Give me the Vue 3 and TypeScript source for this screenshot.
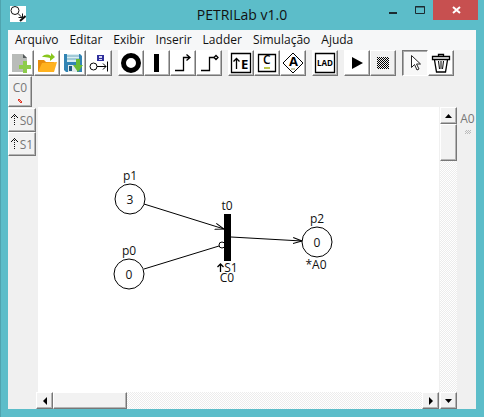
<script setup lang="ts">
import { ref } from 'vue'

interface Tool { id: string; label: string }
interface Place { id: string; x: number; y: number; tokens: number; action?: string }

const menus: string[] = ['Arquivo', 'Editar', 'Exibir', 'Inserir', 'Ladder', 'Simulação', 'Ajuda']

const toolGroups: Tool[][] = [
  [
    { id: 'new', label: 'Novo' },
    { id: 'open', label: 'Abrir' },
    { id: 'save', label: 'Salvar' },
    { id: 'saveNet', label: 'Salvar rede' },
  ],
  [
    { id: 'place', label: 'Lugar' },
    { id: 'transition', label: 'Transição' },
    { id: 'arc', label: 'Arco' },
    { id: 'inhibitor', label: 'Arco inibidor' },
  ],
  [
    { id: 'event', label: 'Evento' },
    { id: 'condition', label: 'Condição' },
    { id: 'action', label: 'Ação' },
  ],
  [{ id: 'ladder', label: 'Ladder' }],
  [
    { id: 'play', label: 'Iniciar' },
    { id: 'stop', label: 'Parar' },
  ],
  [
    { id: 'select', label: 'Selecionar' },
    { id: 'trash', label: 'Excluir' },
  ],
]

const activeTool = ref<string>('select')
const events: string[] = ['S0', 'S1']

const places: Place[] = [
  { id: 'p1', x: 92, y: 92, tokens: 3 },
  { id: 'p0', x: 91, y: 167, tokens: 0 },
  { id: 'p2', x: 279, y: 135, tokens: 0, action: '*A0' },
]
</script>

<template>
  <div class="window">
    <header class="titlebar">
      <svg class="app-icon" width="16" height="16" viewBox="0 0 16 16" aria-hidden="true">
        <rect width="16" height="16" fill="#fff" />
        <circle cx="5" cy="4.500" r="4" fill="none" stroke="#111" />
        <path d="M8 7.500l4 4M8.500 11.500h4v-4" fill="none" stroke="#111" />
        <path d="M10 15l5.500-5" stroke="#111" stroke-width="2" />
      </svg>
      <h1>PETRILab v1.0</h1>
      <div class="controls">
        <button class="ctl" aria-label="Minimizar">
          <svg width="12" height="12" viewBox="0 0 12 12"><path d="M2 8h8v2H2z" fill="#1c2b30" /></svg>
        </button>
        <button class="ctl" aria-label="Maximizar">
          <svg width="12" height="12" viewBox="0 0 12 12"><path d="M1.500 2.500h9v7h-9zM1 3h10" fill="none" stroke="#1c2b30" /></svg>
        </button>
        <button class="ctl close" aria-label="Fechar">
          <svg width="12" height="12" viewBox="0 0 12 12"><path d="M3 3l7 6M10 3L3 9" stroke="#fff" stroke-width="2" /></svg>
        </button>
      </div>
    </header>

    <main class="client">
      <nav class="menubar">
        <button v-for="m in menus" :key="m">{{ m }}</button>
      </nav>

      <div class="toolbar">
        <div v-for="(group, gi) in toolGroups" :key="gi" class="group">
          <button
            v-for="t in group"
            :key="t.id"
            class="raised tool"
            :class="{ pressed: activeTool === t.id, idle: t.id === 'stop' }"
            :aria-label="t.label"
            :aria-pressed="activeTool === t.id"
            @click="activeTool = t.id"
          >
            <svg width="24" height="24" viewBox="0 0 24 24">
              <g v-if="t.id === 'new'">
                <path d="M3 3h11l4 4v14H3z" fill="#b9bcb9" />
                <path d="M14 3l4 4h-4z" fill="#555b5b" />
                <path d="M14 10h4v4h4v4h-4v4h-4v-4h-4v-4h4z" fill="#8dcc4b" />
              </g>
              <g v-else-if="t.id === 'open'">
                <path d="M3 9h6l2 2h8v9H3z" fill="#e88d0b" />
                <path d="M7 12l15-1-3 10H3z" fill="#ffb21f" />
                <path d="M7 6c3-3 6-3 9-1V2l4 4-5 4V7c-3-1-5-1-8-1z" fill="#89c71d" />
              </g>
              <g v-else-if="t.id === 'save'">
                <path d="M3 3h16l2 2v16H5l-2-2z" fill="#3184b4" />
                <path d="M6 3h12v8H6z" fill="#d8edf2" />
                <path d="M6 5h12M6 8h12" stroke="#6ba6bd" />
                <path d="M7 14h9v7H7z" fill="#e0e9eb" />
                <path d="M8 15h3v5H8z" fill="#245b7e" />
                <path d="M15 8h4v6h3l-5 7-5-7h3z" fill="#69bb35" />
              </g>
              <g v-else-if="t.id === 'saveNet'">
                <path d="M10 4h7v6h-7z" fill="#30309c" />
                <path d="M12 5h3v2h-3zM12 8h3v1h-3z" fill="#d8d8f4" />
                <circle cx="6.500" cy="15.500" r="3.500" fill="none" stroke="#000" />
                <path d="M10 15.500h9M16 12.500l3 3-3 3M20.500 10.500v10" fill="none" stroke="#000" />
              </g>
              <circle v-else-if="t.id === 'place'" cx="12" cy="12" r="7.500" fill="#fff" stroke="#000" stroke-width="5" />
              <path v-else-if="t.id === 'transition'" d="M9 3h5v18H9z" fill="#000" />
              <path v-else-if="t.id === 'arc'" d="M4 19.500h8.500v-13H19M15.500 3.500l3.500 3-3.500 3" fill="none" stroke="#000" stroke-width="1.300" />
              <g v-else-if="t.id === 'inhibitor'" fill="none" stroke="#000" stroke-width="1.300">
                <path d="M4 19.500h8.500v-13H17" /><path d="M19 4.500l2 2-2 2-2-2z" />
              </g>
              <g v-else-if="t.id === 'event'">
                <path d="M2.500 2.500h19v19h-19z" fill="#fff" stroke="#000" stroke-width="1.300" />
                <path d="M7.500 18V8M4.500 10.500l3-3 3 3" fill="none" stroke="#000" stroke-width="1.300" />
                <text class="glyph" x="12" y="18">E</text>
              </g>
              <g v-else-if="t.id === 'condition'">
                <path d="M3.500 3.500h17v17h-17z" fill="#fff" stroke="#000" stroke-width="1.300" />
                <text class="glyph plain" x="8" y="13">C</text>
                <path d="M9 16h6v2H9z" fill="#bdc54c" />
              </g>
              <g v-else-if="t.id === 'action'">
                <path d="M12 2l10 10-10 10L2 12z" fill="#fff" stroke="#000" />
                <text class="glyph" x="8" y="15">A</text>
                <path d="M10 17h4v2h-4z" fill="#c8c9a8" />
              </g>
              <g v-else-if="t.id === 'ladder'">
                <path d="M2.500 2.500h19v19h-19z" fill="#fff" stroke="#000" stroke-width="1.300" />
                <text class="glyph small" x="12" y="15" text-anchor="middle">LAD</text>
              </g>
              <path v-else-if="t.id === 'play'" d="M7 6l11 6-11 6z" fill="#000" />
              <g v-else-if="t.id === 'stop'">
                <pattern id="mesh" width="2" height="2" patternUnits="userSpaceOnUse">
                  <path d="M0 0h1v1H0zM1 1h1v1H1z" fill="#000" shape-rendering="crispEdges" />
                </pattern>
                <path d="M6 6h12v12H6z" fill="url(#mesh)" />
              </g>
              <path v-else-if="t.id === 'select'" d="M8.500 4.500v12l3-3 2.500 5.500 2-1-2.500-5h4z" fill="#fff" stroke="#222" />
              <g v-else-if="t.id === 'trash'" fill="none" stroke="#000">
                <path d="M9.500 5V3.500h5V5M3.500 5.500h17v3h-17zM5.500 9l2 12h9l2-12" stroke-width="1.300" />
                <path d="M9.500 10l1 8M14.500 10l-1 8M12 10v8" />
              </g>
            </svg>
          </button>
        </div>
      </div>

      <div class="conditions">
        <button class="raised condition">
          <span>C0</span>
          <svg width="6" height="6" viewBox="0 0 6 6" aria-hidden="true">
            <path d="M1 2l1-1 3 3-1 1z" fill="#f6b0a4" stroke="#e0392a" />
          </svg>
        </button>
      </div>

      <div class="workspace">
        <aside class="events">
          <button v-for="e in events" :key="e" class="raised event">
            <svg width="7" height="12" viewBox="0 0 7 12" aria-hidden="true">
              <path
                d="M3 0h1v1H3zM3 2h1v1H3zM3 4h1v1H3zM3 6h1v1H3zM3 8h1v1H3zM3 10h1v1H3zM2 1h1v1H2zM4 1h1v1H4zM1 2h1v1H1zM5 2h1v1H5zM0 3h1v1H0zM6 3h1v1H6z"
                fill="#111"
              />
            </svg>
            <span>{{ e }}</span>
          </button>
        </aside>

        <svg class="net" role="img" aria-label="Rede de Petri">
          <defs>
            <marker id="arrow" viewBox="0 0 10 8" refX="9" refY="4" markerWidth="10" markerHeight="8" orient="auto">
              <path d="M0 1l9 3-9 3" fill="none" stroke="#000" />
            </marker>
          </defs>
          <g stroke="#000" fill="none">
            <path d="M106 97l80 25" marker-end="url(#arrow)" />
            <path d="M106 162l75-23" />
            <circle cx="184" cy="138" r="3" fill="#fff" />
            <path d="M193 130l71 4" marker-end="url(#arrow)" />
          </g>
          <rect x="186" y="107" width="7" height="47" />
          <text x="189" y="103">t0</text>
          <path d="M182.500 165v-8M179.500 160l3-3 3 3" fill="none" stroke="#000" stroke-width="1.300" />
          <text>
            <tspan x="193" y="165">S1</tspan>
            <tspan x="189" y="175">C0</tspan>
          </text>
          <g v-for="p in places" :key="p.id">
            <circle :cx="p.x" :cy="p.y" r="15" fill="#fff" stroke="#000" />
            <text :x="p.x" :y="p.y + 5">{{ p.tokens }}</text>
            <text :x="p.x" :y="p.y - 19">{{ p.id }}</text>
            <text v-if="p.action" :x="p.x - 1" :y="p.y + 27">{{ p.action }}</text>
          </g>
        </svg>

        <div class="scroll vertical">
          <button class="raised" aria-label="Rolar para cima">
            <svg width="7" height="4" viewBox="0 0 7 4"><path d="M0 4l3.500-4L7 4z" /></svg>
          </button>
          <div class="raised thumb"></div>
          <button class="raised end" aria-label="Rolar para baixo">
            <svg width="7" height="4" viewBox="0 0 7 4"><path d="M0 0l3.500 4L7 0z" /></svg>
          </button>
        </div>

        <div class="scroll horizontal">
          <button class="raised" aria-label="Rolar para a esquerda">
            <svg width="4" height="8" viewBox="0 0 4 8"><path d="M4 0L0 4l4 4z" /></svg>
          </button>
          <div class="raised thumb"></div>
          <button class="raised end" aria-label="Rolar para a direita">
            <svg width="4" height="8" viewBox="0 0 4 8"><path d="M0 0l4 4-4 4z" /></svg>
          </button>
        </div>

        <aside class="actions">
          <span>A0</span>
          <i></i>
        </aside>
      </div>
    </main>
  </div>
</template>

<style>
body {
  margin: 0;
}
</style>

<style scoped>
.window {
  box-sizing: border-box;
  min-height: 100vh;
  display: flex;
  flex-direction: column;
  padding: 0 8px 8px;
  background: #5cbdc9;
  box-shadow: inset 1px 0 #4fa3ae;
  font-family: "Open Sans", "Noto Sans", sans-serif;
  font-size: 12px;
  color: #111;
}
button {
  font: inherit;
  color: inherit;
  padding: 0;
  border: 0;
  background: none;
}
svg {
  display: block;
}
.titlebar {
  display: grid;
  grid-template-columns: 1fr auto 1fr;
  height: 30px;
}
.app-icon {
  margin: 6px 2px;
}
h1 {
  margin: 0;
  font-size: 14px;
  font-weight: 400;
  line-height: 30px;
}
.controls {
  display: flex;
  justify-content: flex-end;
  margin-right: -2px;
}
.ctl {
  display: grid;
  place-items: center;
  width: 27px;
  height: 20px;
}
.ctl.close {
  width: 45px;
  background: #c75050;
}
.client {
  flex: 1;
  display: flex;
  flex-direction: column;
  background: #f0f0f0;
}
.menubar {
  display: flex;
  gap: 11px;
  height: 20px;
  padding: 0 7px;
  background: #f6f7f8;
  line-height: 20px;
}
.toolbar {
  display: flex;
  gap: 6px;
}
.group {
  display: flex;
}
.raised {
  box-sizing: border-box;
  background: #f2f2f2;
  border: 1px solid;
  border-color: #fff #777 #777 #fff;
  box-shadow: inset -1px -1px #b4b4b4;
}
.tool {
  width: 26px;
  height: 26px;
  background: #fff;
}
.tool.pressed {
  background: #f7f7f7;
  border-color: #777 #fff #fff #777;
  box-shadow: inset 1px 1px #aaa;
}
.tool.idle {
  background: #f1f1f1;
}
.glyph {
  font-size: 13px;
  font-weight: 700;
}
.glyph.plain {
  font-weight: 600;
  font-size: 12px;
}
.glyph.small {
  font-size: 8px;
}
.conditions {
  height: 31px;
}
.condition {
  display: flex;
  flex-direction: column;
  align-items: center;
  gap: 2px;
  width: 24px;
  height: 31px;
  padding-top: 3px;
  color: #777;
  line-height: 16px;
}
.workspace {
  flex: 1;
  display: grid;
  grid-template-columns: 28px 2px 1fr 18px 19px;
  grid-template-rows: 1fr 17px;
}
.events {
  grid-area: 1 / 1;
  display: flex;
  flex-direction: column;
  padding-top: 1px;
}
.event {
  display: flex;
  align-items: center;
  justify-content: center;
  gap: 2px;
  height: 24px;
  color: #777;
}
.net {
  grid-area: 1 / 3;
  width: 100%;
  height: 100%;
  background: #fff;
}
.net text {
  text-anchor: middle;
  fill: #111;
}
.scroll {
  display: flex;
  background: repeating-conic-gradient(#fff 0 25%, #ececec 0 50%) 0 0 / 2px 2px;
}
.scroll button {
  display: grid;
  place-items: center;
  width: 17px;
  height: 17px;
}
.scroll .end {
  margin-top: auto;
}
.vertical {
  grid-area: 1 / 4 / 3 / 5;
  flex-direction: column;
  margin-left: 1px;
}
.vertical .thumb {
  height: 37px;
}
.horizontal {
  grid-area: 2 / 2 / 3 / 4;
}
.horizontal .thumb {
  width: 74px;
}
.horizontal .end {
  margin: 0 0 0 auto;
}
.actions {
  grid-area: 1 / 5;
  display: flex;
  flex-direction: column;
  align-items: center;
  gap: 3px;
  padding: 4px 0 0 2px;
  color: #777;
  line-height: 16px;
}
.actions i {
  width: 6px;
  height: 4px;
  background: repeating-conic-gradient(#bbb 0 25%, #f0f0f0 0 50%) 0 0 / 2px 2px;
}
</style>
